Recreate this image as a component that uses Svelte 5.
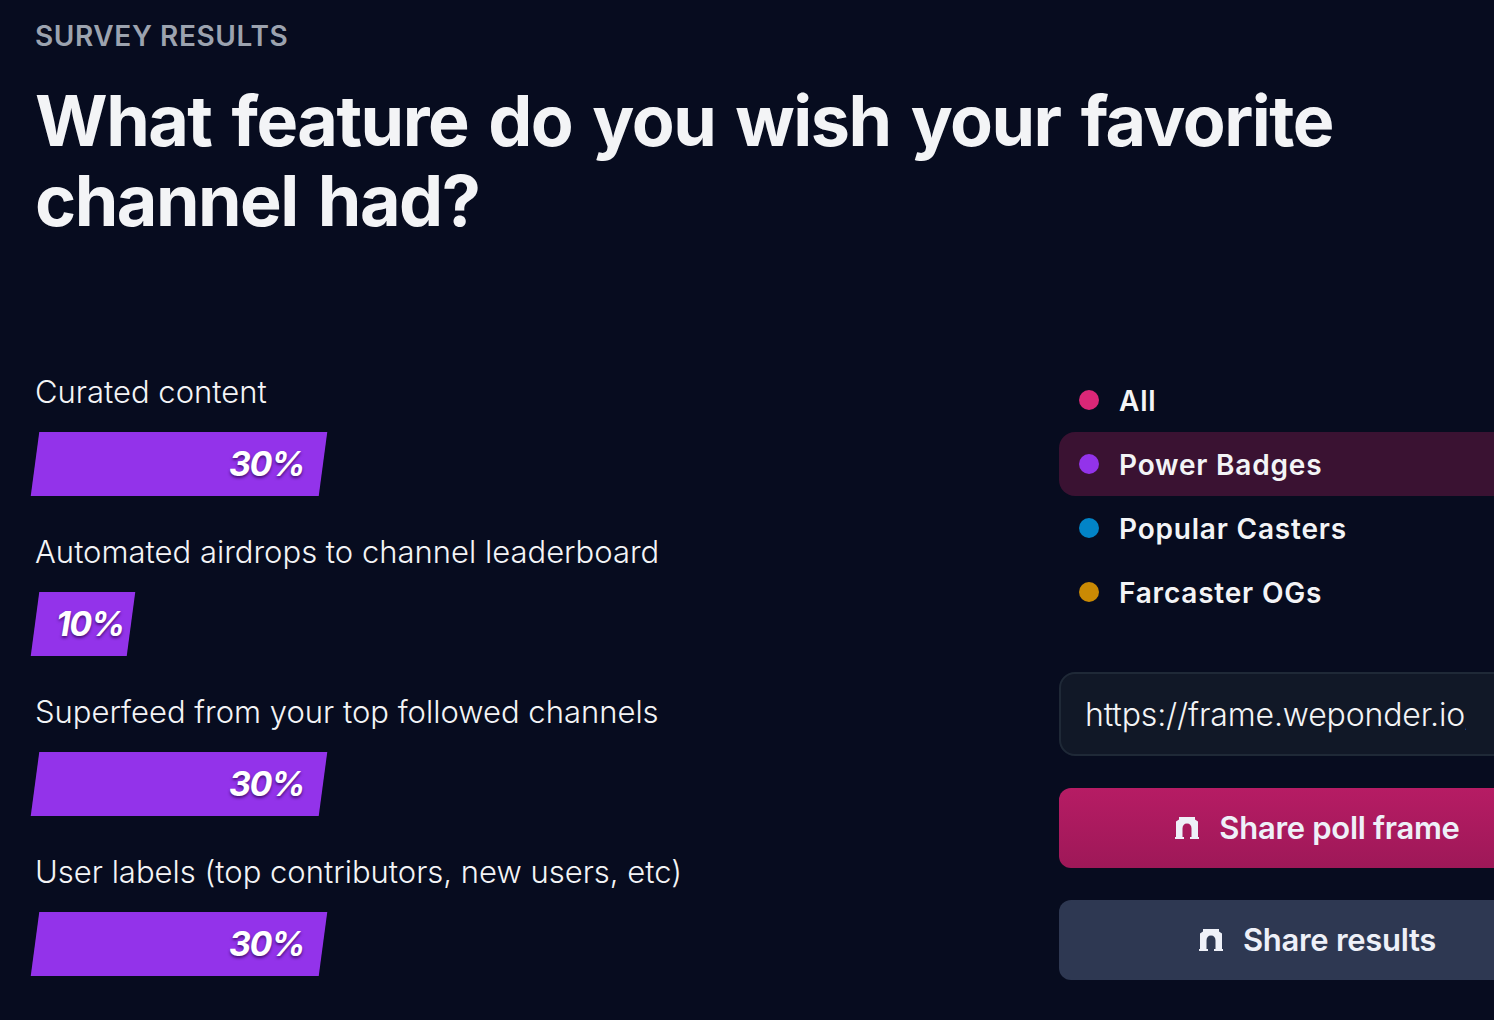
<script lang="ts">
  const answers = [
    { label: "Curated content", percent: 30 },
    { label: "Automated airdrops to channel leaderboard", percent: 10 },
    { label: "Superfeed from your top followed channels", percent: 30 },
    { label: "User labels (top contributors, new users, etc)", percent: 30 },
  ];

  const segments = [
    { name: "All", color: "#db2777" },
    { name: "Power Badges", color: "#9333ea" },
    { name: "Popular Casters", color: "#0284c7" },
    { name: "Farcaster OGs", color: "#ca8a04" },
  ];

  let selected = $state("Power Badges");
</script>

{#snippet arch()}
  <svg class="arch" viewBox="0 0 24 22" width="24" height="22" aria-hidden="true">
    <path
      fill="currentColor"
      d="M4 0H20V2.500L23 4.500V20H24V22H15V20H16.500V11.500C16.500 8.500 15 6.500 12 6.500C9 6.500 7.500 8.500 7.500 11.500V20H9V22H0V20H1V4.500L4 2.500Z"
    />
  </svg>
{/snippet}

<main class="page">
  <header class="head">
    <div class="eyebrow">SURVEY RESULTS</div>
    <h1>What feature do you wish your favorite channel had?</h1>
  </header>

  <div class="columns">
    <section class="answers">
      {#each answers as answer}
        <div class="answer">
          <div class="label">{answer.label}</div>
          <div
            class="bar"
            class:short={answer.percent < 20}
            style="width: {answer.percent * 9.6}px"
          >
            <span>{answer.percent}%</span>
          </div>
        </div>
      {/each}
    </section>

    <aside class="side">
      <ul class="segments">
        {#each segments as segment}
          <li>
            <button
              class="segment"
              class:active={selected === segment.name}
              onclick={() => (selected = segment.name)}
            >
              <i class="dot" style="background: {segment.color}"></i>
              <span class="name">{segment.name}</span>
            </button>
          </li>
        {/each}
      </ul>

      <div class="url">
        <input readonly value="https://frame.weponder.io/api/polls/1234" />
      </div>

      <button class="share primary">{@render arch()} <span class="text">Share poll frame</span></button>
      <button class="share secondary">{@render arch()} <span class="text">Share results</span></button>
    </aside>
  </div>
</main>

<style>
  :global(body) {
    margin: 0;
    background: #070c1f;
    overflow: hidden;
  }

  .page {
    width: 1494px;
    height: 1020px;
    overflow: hidden;
    padding: 20px 0 0 35px;
    box-sizing: border-box;
    font-family: Inter, "Liberation Sans", sans-serif;
    color: #f3f4f6;
  }

  .eyebrow {
    font-size: 28px;
    line-height: 32px;
    font-weight: 600;
    letter-spacing: 0.6px;
    color: #9ca3af;
  }

  h1 {
    width: 1380px;
    margin: 29px 0 0;
    font-size: 70px;
    line-height: 80px;
    font-weight: 700;
    letter-spacing: -1.5px;
    word-spacing: 5px;
  }

  .columns {
    display: grid;
    grid-template-columns: 1024px 517px;
    margin-top: 119px;
  }

  .answers {
    padding-top: 13px;
  }

  .answer {
    height: 160px;
  }

  .label {
    height: 59px;
    font-size: 31px;
    line-height: 38px;
    font-weight: 300;
  }

  .bar {
    height: 64px;
    padding: 0 19px 2px 0;
    box-sizing: border-box;
    display: flex;
    align-items: center;
    justify-content: flex-end;
    background: #9333ea;
    transform: skewX(-7.6deg);
  }

  .bar.short {
    padding-right: 7px;
  }

  .bar span {
    font-size: 34px;
    font-weight: 700;
    font-style: italic;
    letter-spacing: -1.5px;
    color: #fff;
    text-shadow: 0 2px 3px rgba(50, 10, 90, 0.8);
    transform: skewX(7.6deg);
  }

  .segments {
    list-style: none;
    margin: 8px 0 0;
    padding: 0;
  }

  .segment {
    display: flex;
    align-items: center;
    gap: 20px;
    width: 100%;
    height: 64px;
    padding: 0 20px;
    border: 0;
    border-radius: 16px;
    background: transparent;
    font: 600 28px Inter, "Liberation Sans", sans-serif;
    letter-spacing: 0.8px;
    color: #f3f4f6;
  }

  .segment .name {
    padding-top: 2px;
  }

  .segment.active {
    background: #3a1232;
  }

  .dot {
    width: 20px;
    height: 20px;
    border-radius: 50%;
  }

  .url {
    height: 84px;
    margin-top: 48px;
    padding: 0 24px;
    box-sizing: border-box;
    display: flex;
    align-items: center;
    background: #111827;
    border: 2px solid #1f2937;
    border-radius: 16px;
  }

  .url input {
    width: 381px;
    padding: 0;
    border: 0;
    outline: 0;
    background: transparent;
    font: 300 32px Inter, "Liberation Sans", sans-serif;
    letter-spacing: -0.15px;
    color: #f3f4f6;
  }

  .share {
    display: flex;
    align-items: center;
    justify-content: center;
    gap: 20px;
    width: 100%;
    height: 80px;
    margin-top: 32px;
    border: 0;
    border-radius: 12px;
    font: 600 31px Inter, "Liberation Sans", sans-serif;
    letter-spacing: -0.3px;
    color: #eef0f8;
  }

  .share .text {
    padding-bottom: 2px;
  }

  .primary {
    background: linear-gradient(#b61c64, #9e1858);
  }

  .secondary {
    background: #2e3852;
  }

  .arch {
    flex: none;
  }
</style>
